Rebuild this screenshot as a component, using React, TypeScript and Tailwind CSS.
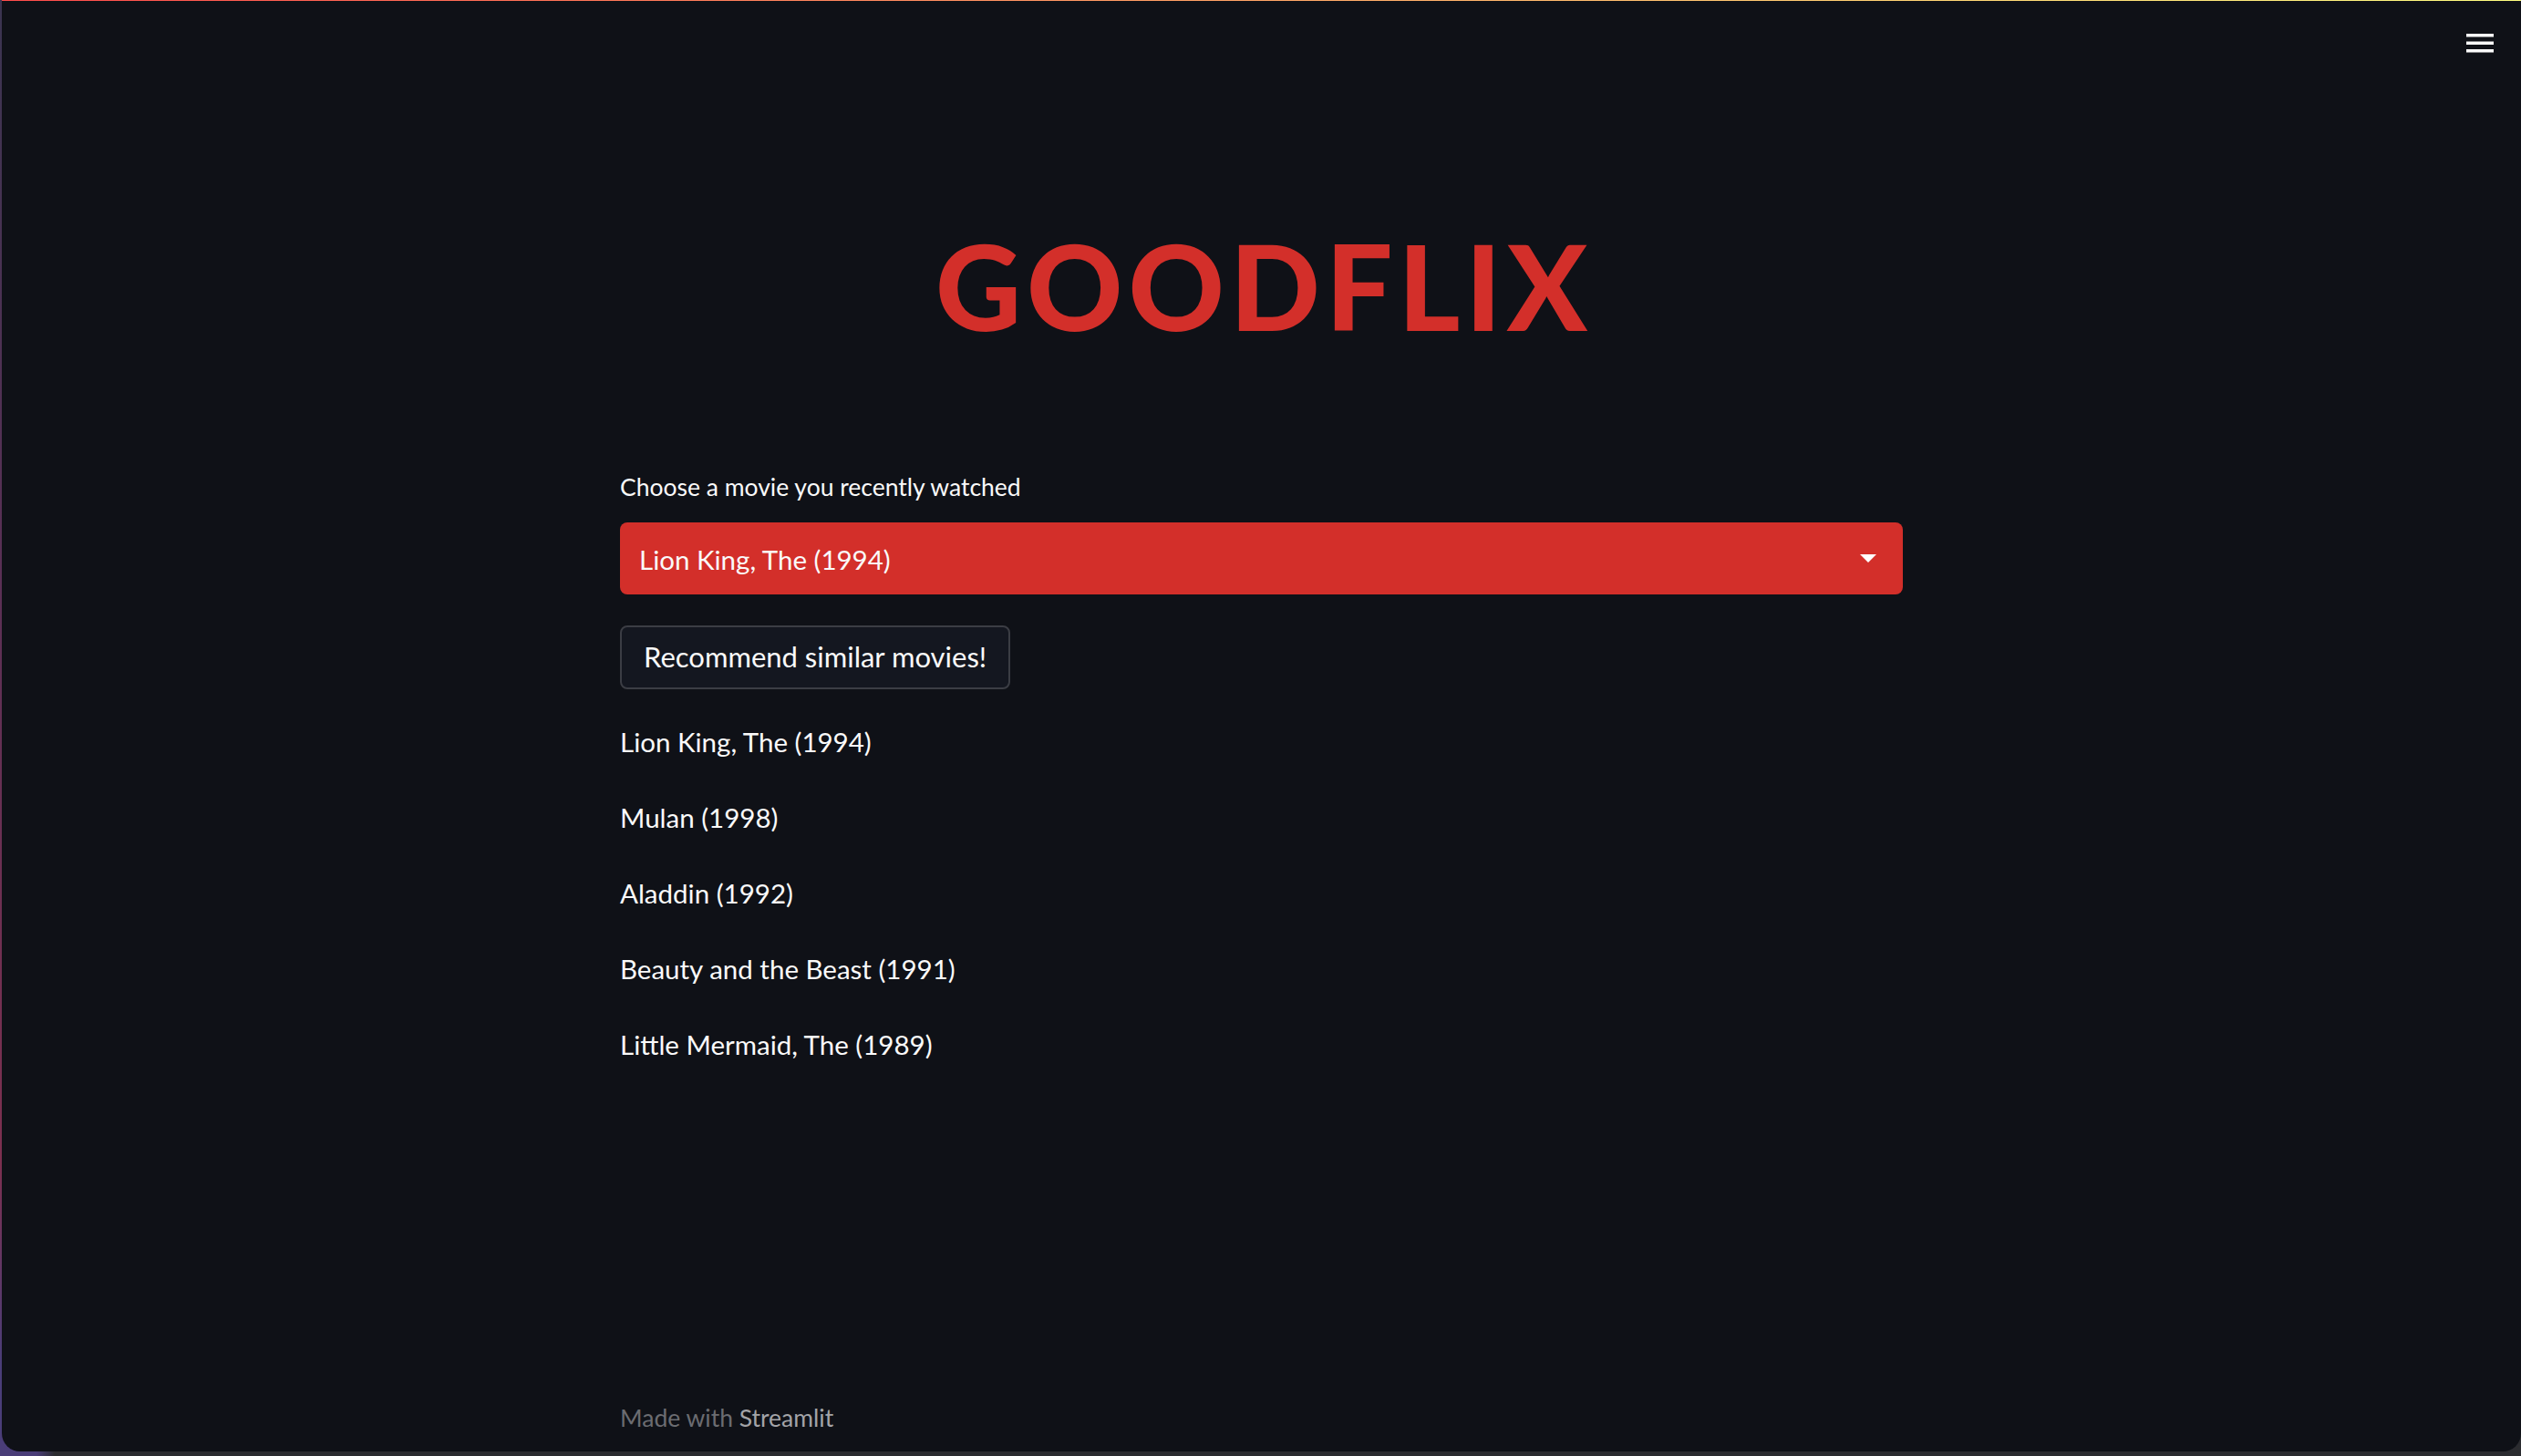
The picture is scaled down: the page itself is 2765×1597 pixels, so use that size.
import React from "react";

const movies = [
  "Lion King, The (1994)",
  "Mulan (1998)",
  "Aladdin (1992)",
  "Beauty and the Beast (1991)",
  "Little Mermaid, The (1989)",
];

function MenuIcon() {
  return (
    <svg width="30" height="21" viewBox="0 0 30 21" fill="#fafafa">
      <rect x="0" y="0" width="30" height="3.5" />
      <rect x="0" y="8.5" width="30" height="3.5" />
      <rect x="0" y="17" width="30" height="3.5" />
    </svg>
  );
}

function Caret() {
  return (
    <svg width="18" height="9" viewBox="0 0 18 9" fill="#ffffff">
      <path d="M0 0 L18 0 L9 9 Z" />
    </svg>
  );
}

export default function App() {
  return (
    <div className="w-[2765px] h-[1597px] overflow-hidden bg-[linear-gradient(90deg,#4a3d78_0px,#4a3d78_40px,#2b2c30_60px)]">
      <div className="flex h-full">
        {/* desktop edge on the left */}
        <div className="w-[2px] h-[1592px] bg-[linear-gradient(180deg,#3a3450_0%,#5a2f55_40%,#7c2f4f_80%,#4a3d78_94%)]" />

        {/* browser window */}
        <div
          className="relative flex-1 h-[1592px] flex flex-col bg-[#0f1117] rounded-b-[20px] overflow-hidden text-[#fafafa]"
          style={{ fontFamily: "Lato, 'Noto Sans', sans-serif" }}
        >
          <div className="h-[1px] bg-[linear-gradient(90deg,#ff4b4b,#fffd80)]" />

          <button className="absolute top-[37px] right-[30px]">
            <MenuIcon />
          </button>

          <main className="w-[1407px] mx-auto flex flex-col flex-1">
            <h1 className="mt-[247px] pl-[6px] text-center text-[130px] leading-none font-black tracking-[6px] text-[#d32f2a]">
              GOODFLIX
            </h1>

            <label className="mt-[143px] text-[26.5px] leading-none">
              Choose a movie you recently watched
            </label>

            <div className="mt-[25px] h-[79px] rounded-[8px] bg-[#d32f2a] flex items-center justify-between pl-[21px] pr-[29px]">
              <span className="pt-[3px] text-[29.5px] leading-none">Lion King, The (1994)</span>
              <Caret />
            </div>

            <div className="mt-[34px]">
              <button className="h-[70px] px-[24px] rounded-[8px] border-2 border-[#3b3d44] bg-[#141720] text-[31px] leading-none">
                Recommend similar movies!
              </button>
            </div>

            <div className="mt-[43px] flex flex-col gap-[53.5px]">
              {movies.map((m) => (
                <p key={m} className="text-[29.5px] leading-none">
                  {m}
                </p>
              ))}
            </div>

            <footer className="mt-auto pb-[24px] text-[26.5px] leading-none text-[#6b6c71]">
              Made with <span className="text-[#a3a4a8]">Streamlit</span>
            </footer>
          </main>
        </div>
      </div>
      <div className="h-[5px] bg-[#2b2c30] border-t border-[#3a3b40]" />
    </div>
  );
}
